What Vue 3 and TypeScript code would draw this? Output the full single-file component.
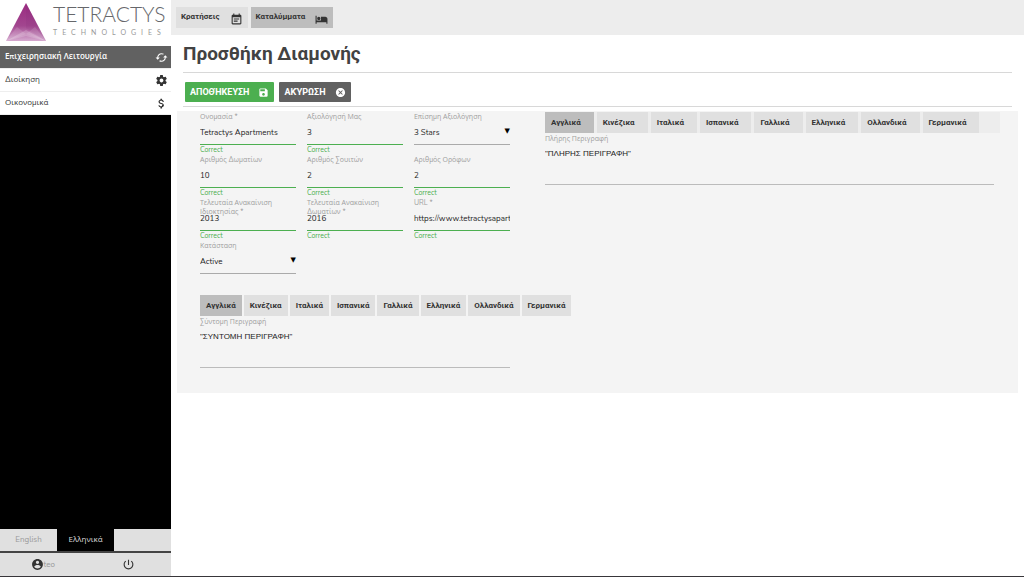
<script setup lang="ts">
import { ref } from 'vue'

interface Field {
  id: string
  label: string
  value: string
  kind: 'text' | 'select'
}

const fields = ref<Field[]>([
  { id: 'name', label: 'Ονομασία *', value: 'Tetractys Apartments', kind: 'text' },
  { id: 'rating', label: 'Αξιολόγησή Μας', value: '3', kind: 'text' },
  { id: 'official', label: 'Επίσημη Αξιολόγηση', value: '3 Stars', kind: 'select' },
  { id: 'rooms', label: 'Αριθμός Δωματίων', value: '10', kind: 'text' },
  { id: 'suites', label: 'Αριθμός Σουιτών', value: '2', kind: 'text' },
  { id: 'floors', label: 'Αριθμός Ορόφων', value: '2', kind: 'text' },
  { id: 'renewed', label: 'Τελευταία Ανακαίνιση Ιδιοκτησίας *', value: '2013', kind: 'text' },
  { id: 'roomsRenewed', label: 'Τελευταία Ανακαίνιση Δωματίων *', value: '2016', kind: 'text' },
  { id: 'url', label: 'URL *', value: 'https://www.tetractysapartments.com', kind: 'text' },
  { id: 'status', label: 'Κατάσταση', value: 'Active', kind: 'select' },
])

const languages = ['Αγγλικά', 'Κινέζικα', 'Ιταλικά', 'Ισπανικά', 'Γαλλικά', 'Ελληνικά', 'Ολλανδικά', 'Γερμανικά']
const shortLang = ref(0)
const fullLang = ref(0)
const shortText = ref('"ΣΥΝΤΟΜΗ ΠΕΡΙΓΡΑΦΗ"')
const fullText = ref('"ΠΛΗΡΗΣ ΠΕΡΙΓΡΑΦΗ"')
</script>

<template>
  <div class="app">
    <aside class="sidebar">
      <div class="logo">
        <svg class="mark" viewBox="0 0 40 38" aria-hidden="true">
          <defs>
            <linearGradient id="mark-fill" x1="0" y1="0" x2="0" y2="1">
              <stop offset="0" stop-color="#9a2a80" />
              <stop offset="0.6" stop-color="#a2468f" />
              <stop offset="1" stop-color="#d5a9cf" />
            </linearGradient>
          </defs>
          <path d="M20 0 40 38H0z" fill="url(#mark-fill)" />
          <path d="M20 0 40 38 20 25z" fill="#7d2a77" opacity=".12" />
          <path d="M0 38 11 24 20 31 29 24 40 38 20 31z" fill="#fff" opacity=".12" />
          <path d="M0 38 20 27 40 38 20 33z" fill="#fff" opacity=".2" />
        </svg>
        <div class="brand">
          <span class="brand-name">TETRACTYS</span>
          <span class="brand-sub">TECHNOLOGIES</span>
        </div>
      </div>
      <nav class="menu">
        <a href="#" class="menu-item current">
          <span>Επιχειρησιακή Λειτουργία</span>
          <svg viewBox="0 0 24 24"><path d="M19 8l-4 4h3c0 3.31-2.69 6-6 6-1.01 0-1.97-.25-2.8-.7l-1.46 1.46C8.97 19.54 10.43 20 12 20c4.42 0 8-3.58 8-8h3l-4-4zM6 12c0-3.31 2.69-6 6-6 1.01 0 1.97.25 2.8.7l1.46-1.46C15.03 4.46 13.57 4 12 4c-4.42 0-8 3.58-8 8H1l4 4 4-4H6z" /></svg>
        </a>
        <a href="#" class="menu-item">
          <span>Διοίκηση</span>
          <svg viewBox="0 0 24 24"><path d="M19.43 12.98c.04-.32.07-.64.07-.98s-.03-.66-.07-.98l2.11-1.65c.19-.15.24-.42.12-.64l-2-3.46c-.12-.22-.39-.3-.61-.22l-2.49 1c-.52-.4-1.08-.73-1.69-.98l-.38-2.65C14.46 2.18 14.25 2 14 2h-4c-.25 0-.46.18-.49.42l-.38 2.65c-.61.25-1.17.59-1.69.98l-2.49-1c-.23-.09-.49 0-.61.22l-2 3.46c-.13.22-.07.49.12.64l2.11 1.65c-.04.32-.07.65-.07.98s.03.66.07.98l-2.11 1.65c-.19.15-.24.42-.12.64l2 3.46c.12.22.39.3.61.22l2.49-1c.52.4 1.08.73 1.69.98l.38 2.65c.03.24.24.42.49.42h4c.25 0 .46-.18.49-.42l.38-2.65c.61-.25 1.17-.59 1.69-.98l2.49 1c.23.09.49 0 .61-.22l2-3.46c.12-.22.07-.49-.12-.64l-2.11-1.65zM12 15.5c-1.93 0-3.5-1.57-3.5-3.5s1.57-3.5 3.5-3.5 3.5 1.57 3.5 3.5-1.57 3.5-3.5 3.5z" /></svg>
        </a>
        <a href="#" class="menu-item">
          <span>Οικονομικά</span>
          <svg viewBox="0 0 24 24"><path d="M11.8 10.9c-2.27-.59-3-1.2-3-2.15 0-1.09 1.01-1.85 2.7-1.85 1.78 0 2.44.85 2.5 2.1h2.21c-.07-1.72-1.12-3.3-3.21-3.81V3h-3v2.16c-1.94.42-3.5 1.68-3.5 3.61 0 2.31 1.91 3.46 4.7 4.13 2.5.6 3 1.48 3 2.41 0 .69-.49 1.79-2.7 1.79-2.06 0-2.87-.92-2.98-2.1h-2.2c.12 2.19 1.76 3.42 3.68 3.83V21h3v-2.15c1.95-.37 3.5-1.5 3.5-3.55 0-2.84-2.43-3.81-4.7-4.4z" /></svg>
        </a>
      </nav>
      <div class="langs">
        <button type="button">English</button>
        <button type="button" class="on">Ελληνικά</button>
      </div>
      <div class="account">
        <button type="button">
          <svg viewBox="0 0 24 24"><path d="M12 2C6.48 2 2 6.48 2 12s4.48 10 10 10 10-4.48 10-10S17.52 2 12 2zm0 3c1.66 0 3 1.34 3 3s-1.34 3-3 3-3-1.34-3-3 1.34-3 3-3zm0 14.2c-2.5 0-4.71-1.28-6-3.22.03-1.99 4-3.08 6-3.08 1.99 0 5.97 1.09 6 3.08-1.29 1.94-3.5 3.22-6 3.22z" /></svg>
          <span>teo</span>
        </button>
        <button type="button" aria-label="Logout">
          <svg viewBox="0 0 24 24"><path d="M13 3h-2v10h2V3zm4.83 2.17l-1.42 1.42C17.99 7.86 19 9.81 19 12c0 3.87-3.13 7-7 7s-7-3.13-7-7c0-2.19 1.01-4.14 2.58-5.42L6.17 5.17C4.23 6.82 3 9.26 3 12c0 4.97 4.03 9 9 9s9-4.03 9-9c0-2.74-1.23-5.18-3.17-6.83z" /></svg>
        </button>
      </div>
    </aside>

    <div class="content">
      <header class="topbar">
        <button type="button" class="section">
          <span>Κρατήσεις</span>
          <svg viewBox="0 0 24 24"><path d="M17 10H7v2h10v-2zm2-7h-1V1h-2v2H8V1H6v2H5c-1.11 0-1.99.9-1.99 2L3 19c0 1.1.89 2 2 2h14c1.1 0 2-.9 2-2V5c0-1.1-.9-2-2-2zm0 16H5V8h14v11zm-5-5H7v2h7v-2z" /></svg>
        </button>
        <button type="button" class="section on">
          <span>Καταλύμματα</span>
          <svg viewBox="0 0 24 24"><path d="M7 13c1.66 0 3-1.34 3-3S8.66 7 7 7s-3 1.34-3 3 1.34 3 3 3zm12-6h-8v7H3V5H1v15h2v-3h18v3h2v-9c0-2.21-1.79-4-4-4z" /></svg>
        </button>
      </header>

      <main>
        <h1>Προσθήκη Διαμονής</h1>
        <div class="actions">
          <button type="button" class="save">
            <span>ΑΠΟΘΉΚΕΥΣΗ</span>
            <svg viewBox="0 0 24 24"><path d="M17 3H5c-1.11 0-2 .9-2 2v14c0 1.1.89 2 2 2h14c1.1 0 2-.9 2-2V7l-4-4zm-5 16c-1.66 0-3-1.34-3-3s1.34-3 3-3 3 1.34 3 3-1.34 3-3 3zm3-10H5V5h10v4z" /></svg>
          </button>
          <button type="button" class="cancel">
            <span>ΑΚΎΡΩΣΗ</span>
            <svg viewBox="0 0 24 24"><path d="M12 2C6.47 2 2 6.47 2 12s4.47 10 10 10 10-4.47 10-10S17.53 2 12 2zm5 13.59L15.59 17 12 13.41 8.41 17 7 15.59 10.59 12 7 8.41 8.41 7 12 10.59 15.59 7 17 8.41 13.41 12 17 15.59z" /></svg>
          </button>
        </div>

        <form class="panel" @submit.prevent>
          <div class="left">
            <div class="fields">
              <div v-for="f in fields" :key="f.id" class="field" :class="f.kind">
                <label :for="f.id">{{ f.label }}</label>
                <input v-if="f.kind === 'text'" :id="f.id" v-model="f.value" type="text" />
                <select v-else :id="f.id" v-model="f.value">
                  <option>{{ f.value }}</option>
                </select>
                <span v-if="f.kind === 'text'" class="hint">Correct</span>
              </div>
            </div>
            <div class="tabs">
              <button
                v-for="(l, i) in languages"
                :key="l"
                type="button"
                :class="{ on: i === shortLang }"
                @click="shortLang = i"
              >{{ l }}</button>
            </div>
            <div class="desc">
              <label for="short">Σύντομη Περιγραφή</label>
              <textarea id="short" v-model="shortText"></textarea>
            </div>
          </div>
          <div class="right">
            <div class="tabs wide">
              <button
                v-for="(l, i) in languages"
                :key="l"
                type="button"
                :class="{ on: i === fullLang }"
                @click="fullLang = i"
              >{{ l }}</button>
            </div>
            <div class="desc">
              <label for="full">Πλήρης Περιγραφή</label>
              <textarea id="full" v-model="fullText"></textarea>
            </div>
          </div>
        </form>
      </main>
    </div>
  </div>
</template>

<style>
body {
  background: #fff;
}
</style>

<style scoped>
.app,
.app * {
  box-sizing: border-box;
}
.app {
  display: flex;
  min-height: 100vh;
  border-bottom: 1px solid #38363a;
  font-family: Nunito, "Open Sans", "Noto Sans", sans-serif;
  font-size: 8px;
  line-height: 12px;
  color: #222;
}
button,
input,
select,
textarea {
  margin: 0;
  padding: 0;
  border: 0;
  border-radius: 0;
  background: none;
  font: inherit;
  color: inherit;
  outline: 0;
}
svg {
  flex: none;
  fill: currentColor;
}

.sidebar {
  flex: none;
  display: flex;
  flex-direction: column;
  width: 171px;
  background: #000;
}
.logo {
  display: flex;
  gap: 7px;
  height: 46px;
  padding: 3px 6px;
  background: #fff;
}
.mark {
  width: 40px;
  height: 38px;
}
.brand {
  display: flex;
  flex-direction: column;
  gap: 4px;
  padding-top: 1px;
  font-family: Lato, sans-serif;
  white-space: nowrap;
}
.brand-name {
  font-size: 21px;
  line-height: 20px;
  font-weight: 300;
  color: #66676b;
}
.brand-sub {
  font-size: 7px;
  line-height: 8px;
  letter-spacing: 5px;
  color: #999;
}
.menu {
  display: flex;
  flex-direction: column;
}
.menu-item {
  display: flex;
  align-items: center;
  justify-content: space-between;
  height: 23px;
  padding: 0 3px 0 5px;
  border-bottom: 1px solid #eee;
  background: #fff;
  color: #333;
  text-decoration: none;
}
.menu-item svg {
  width: 13px;
  height: 13px;
}
.menu-item.current {
  background: #616161;
  color: #fff;
  font-weight: 600;
}
.langs {
  display: flex;
  height: 24px;
  margin-top: auto;
  border-bottom: 2px solid #444;
  background: #e0e0e0;
}
.langs button {
  width: 57px;
  color: #999;
}
.langs .on {
  background: #000;
  color: #ddd;
}
.account {
  display: flex;
  height: 23px;
  background: #e0e0e0;
}
.account button {
  flex: 1;
  display: flex;
  align-items: center;
  justify-content: center;
  color: #999;
}
.account svg {
  width: 13px;
  height: 13px;
  color: #333;
}

.content {
  flex: 1;
  min-width: 0;
}
.topbar {
  display: flex;
  gap: 3px;
  height: 35px;
  padding: 7px 5px;
  background: #ededed;
}
.section {
  display: flex;
  gap: 10px;
  height: 21px;
  padding: 4px 5px;
  background: #e0e0e0;
  font-family: Roboto, sans-serif;
  font-weight: 700;
  color: #333;
}
.section.on {
  background: #bdbdbd;
}
.section svg {
  width: 13px;
  height: 13px;
  margin-top: 2px;
}
h1 {
  margin: 0 12px;
  padding: 6px 0;
  border-bottom: 1px solid #d8d8d8;
  font-family: Roboto, sans-serif;
  font-size: 19px;
  line-height: 25px;
  font-weight: 700;
  color: #424242;
}
.actions {
  display: flex;
  gap: 5px;
  margin: 0 12px;
  padding: 9px 2px 4px;
  border-bottom: 1px solid #d8d8d8;
}
.actions button {
  display: flex;
  align-items: center;
  gap: 9px;
  height: 20px;
  padding: 0 5px;
  border-radius: 1px;
  color: #fff;
  font-family: Roboto, sans-serif;
  font-size: 9px;
  font-weight: 700;
}
.actions svg {
  width: 11px;
  height: 11px;
}
.actions .save {
  background: #4caf50;
}
.actions .cancel {
  background: #616161;
}

.panel {
  display: grid;
  grid-template-columns: 368px 1fr;
  margin: 4px 6px 0;
  padding-bottom: 25px;
  background: #f4f4f4;
}
.left {
  padding-left: 23px;
}
.fields {
  display: grid;
  grid-template-columns: repeat(3, 96px);
  column-gap: 11px;
  grid-auto-rows: 43px;
  margin-bottom: 12px;
}
.field {
  position: relative;
  display: flex;
  flex-direction: column;
  padding-top: 12px;
}
.field label {
  position: absolute;
  top: 1px;
  left: 0;
}
label {
  font-size: 7px;
  line-height: 9px;
  color: #9e9e9e;
}
.field input,
.field select {
  width: 100%;
  height: 22px;
  padding-bottom: 2px;
  border-bottom: 1px solid #4caf50;
}
.field select {
  appearance: none;
  border-bottom-color: #aaa;
}
.field.select::after {
  content: "▼";
  position: absolute;
  top: 14px;
  right: 0;
  font-family: "DejaVu Sans", sans-serif;
  font-size: 7px;
  color: #000;
  pointer-events: none;
}
.hint {
  font-size: 7px;
  line-height: 9px;
  color: #4caf50;
}
.tabs {
  display: flex;
  gap: 2px;
  width: max-content;
}
.tabs button {
  height: 21px;
  padding: 0 6px;
  background: #e0e0e0;
  font-family: Roboto, sans-serif;
  font-weight: 700;
  text-align: left;
  color: #333;
}
.tabs .on {
  background: #bdbdbd;
}
.tabs.wide {
  gap: 3px;
  width: auto;
  margin: 1px 18px 0 0;
  background: #ededed;
}
.tabs.wide button {
  padding-right: 13px;
}
.desc {
  display: flex;
  flex-direction: column;
  gap: 5px;
  padding-top: 1px;
}
.desc textarea {
  height: 37px;
  border-bottom: 1px solid #bbb;
  font-family: "Liberation Sans", Arial, sans-serif;
  resize: none;
  overflow: hidden;
}
.left .desc {
  width: 310px;
}
.right .desc {
  margin-right: 24px;
}
</style>
